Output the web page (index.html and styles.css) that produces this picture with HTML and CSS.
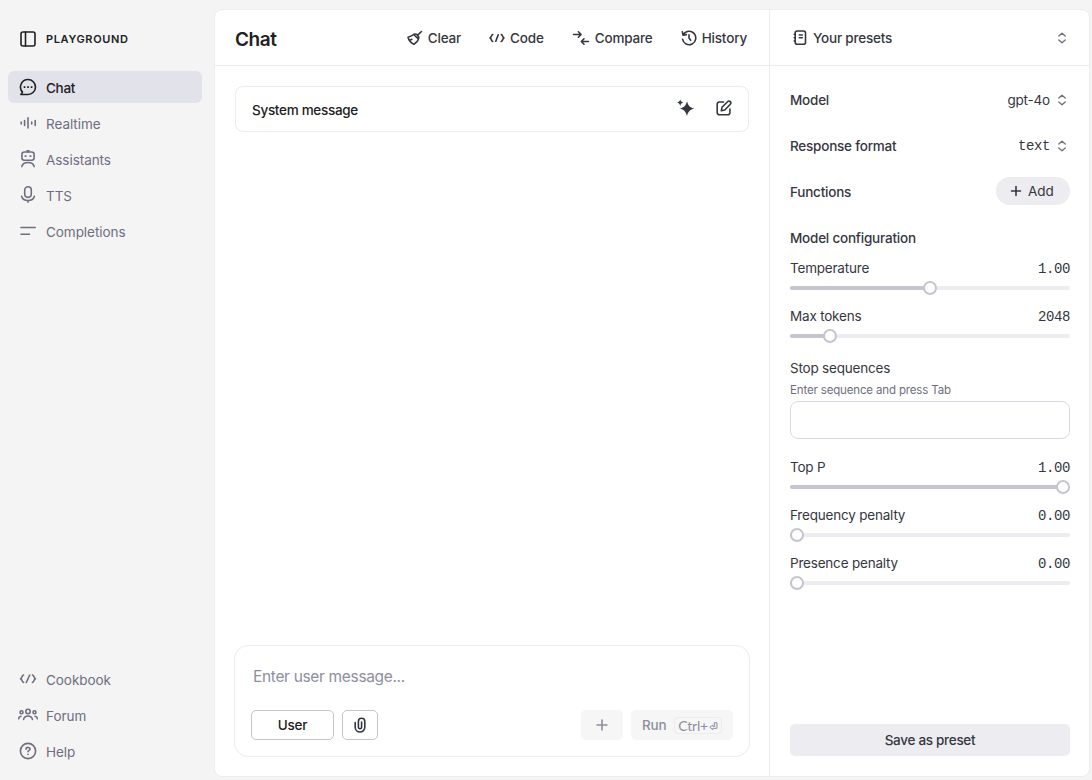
FILE: index.html
```html
<!DOCTYPE html>
<html lang="en">
<head>
<meta charset="utf-8">
<title>Playground</title>
<link rel="stylesheet" href="styles.css">
</head>
<body>
<div class="app">
  <aside class="sidebar">
    <div class="brand">
      <svg class="icon" width="20" height="20" viewBox="0 0 20 20"><rect x="3" y="3" width="14" height="14" rx="2"/><path d="M7.500 3v14"/></svg>
      <span>PLAYGROUND</span>
    </div>
    <nav class="nav">
      <a class="nav-item active"><svg class="icon" width="20" height="20" viewBox="0 0 20 20"><path d="M10 2.500a7.500 7.500 0 1 1 0 15H2.900l1.600-2.400A7.500 7.500 0 0 1 10 2.500z"/><path class="solid" d="M5.700 9.300h1.700v1.600H5.700zM9.200 9.300h1.700v1.600H9.200zM12.700 9.300h1.700v1.600h-1.700z"/></svg><span>Chat</span></a>
      <a class="nav-item"><svg class="icon" width="20" height="20" viewBox="0 0 20 20"><path d="M3.200 9v2M6.600 7.500v5M10 4.800v10.200M13.700 9v2M17.200 7.500v5"/></svg><span>Realtime</span></a>
      <a class="nav-item"><svg class="icon" width="20" height="20" viewBox="0 0 20 20"><path d="M9 1.800h2M10 2v1.200"/><rect x="3.900" y="3" width="12.200" height="8.200" rx="2.500"/><path class="solid" d="M6.600 6.200h1.900v1.900H6.600zM11.500 6.200h1.900v1.900h-1.900z"/><path d="M3.800 17.400c.8-2.600 3-3.900 6.200-3.900s5.400 1.300 6.200 3.900"/></svg><span>Assistants</span></a>
      <a class="nav-item"><svg class="icon" width="20" height="20" viewBox="0 0 20 20"><rect x="6.700" y="1.800" width="6.600" height="10.600" rx="3.300"/><path d="M3.600 11.200c.8 2.700 3.200 4.300 6.400 4.300s5.600-1.600 6.400-4.300M10 15.700v1.500"/></svg><span>TTS</span></a>
      <a class="nav-item"><svg class="icon" width="20" height="20" viewBox="0 0 20 20"><path d="M3 6.500h14.200M3 13.300h8.500"/></svg><span>Completions</span></a>
    </nav>
    <nav class="nav nav-bottom">
      <a class="nav-item"><svg class="icon" width="20" height="20" viewBox="0 0 20 20"><path d="M5.500 6C3.500 6.500 4.500 9 2.500 9.700c2 .7 1 3.200 3 3.700M14.500 6c2 .5 1 3 3 3.700-2 .7-1 3.200-3 3.700M11.700 6l-3.400 7.500"/></svg><span>Cookbook</span></a>
      <a class="nav-item"><svg class="icon" width="20" height="20" viewBox="0 0 20 20"><circle cx="10" cy="6.500" r="2.200"/><circle cx="3.500" cy="7.200" r="1.500"/><circle cx="16.500" cy="7.200" r="1.500"/><path d="M5.600 14.400c.6-2.500 2.200-3.400 4.400-3.400s3.800.9 4.400 3.400M.7 13.800c.1-1.500.9-2.500 2.300-2.600M19.300 13.800c-.1-1.500-.9-2.500-2.300-2.600"/></svg><span>Forum</span></a>
      <a class="nav-item"><svg class="icon" width="20" height="20" viewBox="0 0 20 20"><circle cx="10" cy="10" r="7.600"/><path d="M8 8.100c.2-2.400 4.200-2.100 4 .1-.1 1.300-2 1.200-2 2.600M10 13.200v.2"/></svg><span>Help</span></a>
    </nav>
  </aside>

  <main class="panel">
    <section class="chat">
      <header class="chat-head">
        <h1>Chat</h1>
        <div class="tools">
          <button class="tool clear"><svg class="icon" width="16" height="16" viewBox="0 0 16 16"><path d="M14.500 1.500 10.600 5.200M6.500 4.500C5 5.800 3.300 6.700 1 7.200c.9 3.400 3 5.800 6 7 2.200-1.300 3.800-3 4.500-5.300M6.500 4.500c1.200-.8 2.800-.5 4 .6s1.600 2.500 1 3.800zM2.400 10.500l2.400-1.200M6.500 4.500l5 4.400"/></svg><span>Clear</span></button>
          <button class="tool code"><svg class="icon" width="16" height="16" viewBox="0 0 16 16"><path d="M3.700 4.500C2 5 2.700 7.500 1 8c1.700.5 1 3 2.700 3.500M12.300 4.500c1.700.5 1 3 2.700 3.500-1.700.5-1 3-2.700 3.500M9.200 4.800l-2.400 6.400"/></svg><span>Code</span></button>
          <button class="tool compare"><svg class="icon" width="18" height="16" viewBox="0 0 18 16"><path d="M1.500 4.500H9M6.400 1.800 9.100 4.500 6.400 7.200M16.500 11.500H9.300M12 8.800l-2.700 2.700 2.700 2.700"/></svg><span>Compare</span></button>
          <button class="tool history"><svg class="icon" width="16" height="16" viewBox="0 0 16 16"><path d="M1.500 9.200A6.700 6.700 0 1 0 2.300 4.600M1.300 1.700l.7 3.400 3.400-.5M8 4.800V8l1.700 2.300"/></svg><span>History</span></button>
        </div>
      </header>
      <div class="chat-body">
        <div class="system">
          <span>System message</span>
          <div class="system-icons">
            <svg class="icon" width="18" height="18" viewBox="0 0 18 18"><path class="solid" d="M10 2.200c1.300 4.600 2.800 6.100 7.400 7.400-4.600 1.300-6.100 2.800-7.400 7.400-1.300-4.600-2.800-6.100-7.400-7.400C7.200 8.300 8.700 6.800 10 2.200zM3.200.5c.7 1.900 1.200 2.400 3.100 3.100-1.900.7-2.400 1.200-3.100 3.100C2.500 4.800 2 4.300.1 3.600 2 2.900 2.500 2.400 3.200.5z"/></svg>
            <svg class="icon" width="18" height="18" viewBox="0 0 18 18"><path d="M8.500 3H4.300A2.100 2.100 0 0 0 2.200 5.100v8.600a2.100 2.100 0 0 0 2.100 2.100h8.500a2.100 2.100 0 0 0 2.100-2.100V10M12.600 2.700a1.800 1.800 0 0 1 2.700 2.600l-5.600 5.700-3.400.8.700-3.500z"/></svg>
          </div>
        </div>
        <div class="composer">
          <div class="placeholder">Enter user message...</div>
          <div class="composer-row">
            <button class="btn user">User</button>
            <button class="btn attach"><svg class="icon" width="16" height="18" viewBox="0 0 16 18"><path d="M3.200 6.500v4.700a4.800 4.800 0 0 0 9.600 0V5.400a3.200 3.200 0 0 0-6.400 0v5.800a1.600 1.600 0 0 0 3.200 0V6"/></svg></button>
            <span class="spacer"></span>
            <button class="btn muted add-msg"><svg class="icon" width="14" height="14" viewBox="0 0 14 14"><path d="M7 2v10M2 7h10"/></svg></button>
            <button class="btn muted run"><span>Run</span><kbd>Ctrl+<svg class="icon" width="9" height="9" viewBox="0 0 9 9"><path d="M5.500.8H8v5.500H3.800v1.400L.8 5.300l3-2.300v1.300h1.700z"/></svg></kbd></button>
          </div>
        </div>
      </div>
    </section>

    <section class="settings">
      <header class="presets">
        <svg class="icon" width="16" height="16" viewBox="0 0 16 16"><rect x="3.200" y="1" width="10.300" height="13.300" rx="2"/><path d="M2.200 4.300h1M2.200 7.700h1M2.200 11h1M7.300 5h3M7.300 7.800h3"/></svg>
        <span>Your presets</span>
        <svg class="icon updown" width="10" height="12" viewBox="0 0 10 12"><path d="M1.800 4 5 1.200 8.200 4M1.800 8 5 10.800 8.200 8"/></svg>
      </header>
      <div class="form">
        <div class="row"><b>Model</b><span class="select">gpt-4o <svg class="icon updown" width="10" height="12" viewBox="0 0 10 12"><path d="M1.800 4 5 1.200 8.200 4M1.800 8 5 10.800 8.200 8"/></svg></span></div>
        <div class="row"><b>Response format</b><span class="select"><code>text</code> <svg class="icon updown" width="10" height="12" viewBox="0 0 10 12"><path d="M1.800 4 5 1.200 8.200 4M1.800 8 5 10.800 8.200 8"/></svg></span></div>
        <div class="row"><b>Functions</b><button class="add"><svg class="icon" width="12" height="12" viewBox="0 0 12 12"><path d="M6 1.500v9M1.500 6h9"/></svg><span>Add</span></button></div>
        <div class="row config"><b>Model configuration</b></div>
        <div class="field"><div class="label"><span>Temperature</span><code>1.00</code></div><div class="track"><div class="fill" style="width:140px"></div><div class="thumb"></div></div></div>
        <div class="field"><div class="label"><span>Max tokens</span><code>2048</code></div><div class="track"><div class="fill" style="width:40px"></div><div class="thumb"></div></div></div>
        <div class="stop"><div class="label"><span>Stop sequences</span></div><div class="hint">Enter sequence and press Tab</div><div class="input"></div></div>
        <div class="field"><div class="label"><span>Top P</span><code>1.00</code></div><div class="track"><div class="fill" style="width:273px"></div><div class="thumb"></div></div></div>
        <div class="field"><div class="label"><span>Frequency penalty</span><code>0.00</code></div><div class="track"><div class="fill" style="width:7px"></div><div class="thumb"></div></div></div>
        <div class="field"><div class="label"><span>Presence penalty</span><code>0.00</code></div><div class="track"><div class="fill" style="width:7px"></div><div class="thumb"></div></div></div>
        <button class="save">Save as preset</button>
      </div>
    </section>
  </main>
</div>
</body>
</html>
```

FILE: styles.css
```css
* { box-sizing: border-box; }
body { margin: 0; background: #f4f4f4; color: #353740; font: 13.5px/20px Inter, "Liberation Sans", sans-serif; letter-spacing: -.2px; }
button { font: inherit; letter-spacing: inherit; color: inherit; border: 0; padding: 0; background: none; }
.app { display: flex; height: 780px; padding: 9px 2px 3px 0; overflow: hidden; }
.icon { display: block; flex: none; fill: none; stroke: currentColor; stroke-width: 1.6; stroke-linecap: round; stroke-linejoin: round; }
.solid { fill: currentColor; stroke: none; }

.sidebar { width: 214px; padding: 0 12px 10px 8px; display: flex; flex-direction: column; }
.brand { display: flex; align-items: center; gap: 8px; height: 60px; padding-left: 10px; margin-bottom: 2px; font-size: 11px; font-weight: 600; letter-spacing: .65px; color: #202123; }
.nav { display: flex; flex-direction: column; gap: 4px; letter-spacing: -.05px; }
.nav-bottom { margin-top: auto; }
.nav-item { display: flex; align-items: center; gap: 8px; height: 32px; padding-left: 10px; border-radius: 6px; color: #6e6e80; }
.nav-item span { padding-top: 2px; }
.active { background: #e2e2ea; color: #202123; font-weight: 500; letter-spacing: -.3px; }

.panel { flex: 1; display: flex; background: #fff; border: 1px solid #ececf1; border-radius: 8px; overflow: hidden; }
.chat { width: 555px; display: flex; flex-direction: column; border-right: 1px solid #ececec; }
.chat-head { display: flex; align-items: center; justify-content: space-between; height: 56px; padding: 0 22px 0 20px; border-bottom: 1px solid #ececec; }
h1 { margin: 4px 0 0; font-size: 19px; line-height: 24px; font-weight: 600; letter-spacing: -.4px; color: #202123; }
.tools { display: flex; gap: 28px; font-weight: 500; letter-spacing: -.17px; }
.tool { display: flex; align-items: center; gap: 5px; }
.tool span { padding-top: 1px; }
.chat-body { flex: 1; display: flex; flex-direction: column; justify-content: space-between; padding: 20px 19px 19px; }
.system { display: flex; align-items: center; justify-content: space-between; height: 46px; margin: 0 1px; padding: 1px 15px 0 16px; border: 1px solid #ececec; border-radius: 8px; font-weight: 500; letter-spacing: -.3px; color: #202123; }
.system-icons { display: flex; gap: 20px; color: #353740; margin-top: -3px; }
.composer { height: 112px; padding: 21px 16px 16px; border: 1px solid #ececec; border-radius: 14px; }
.placeholder { padding-left: 2px; font-size: 15.5px; letter-spacing: -.33px; color: #8e8ea0; }
.composer-row { display: flex; margin-top: 23px; gap: 8px; }
.btn { display: flex; align-items: center; justify-content: center; height: 30px; border-radius: 5px; font-weight: 500; }
.user { width: 83px; border: 1px solid #c5c5d2; color: #202123; }
.attach { width: 36px; border: 1px solid #c5c5d2; }
.spacer { flex: 1; }
.muted { background: #f6f6f6; color: #8e8ea0; }
.add-msg { width: 42px; }
.run { width: 102px; gap: 8px; }
kbd { display: flex; align-items: center; gap: 1px; height: 17px; padding: 2px 3px 0; border: 1px solid #ececf1; border-radius: 4px; font: 14px/14px Lato, sans-serif; }
kbd .icon { stroke-width: 1; }

.settings { flex: 1; display: flex; flex-direction: column; }
.presets { display: flex; align-items: center; gap: 5px; height: 56px; padding: 0 22px; border-bottom: 1px solid #ececec; font-weight: 500; letter-spacing: -.2px; }
.presets span { padding-top: 1px; }
.updown { color: #6e6e80; stroke-width: 1.3; }
.presets .updown { margin-left: auto; }
.form { flex: 1; display: flex; flex-direction: column; padding: 11px 19px 20px 20px; }
.row { display: flex; align-items: center; justify-content: space-between; height: 46px; }
.row b { font-weight: 500; letter-spacing: -.22px; margin-top: -1px; }
.select { display: flex; align-items: center; gap: 7px; padding-right: 3px; }
code { font: 14px/20px "Liberation Mono", monospace; letter-spacing: -.4px; }
.add { display: flex; align-items: center; gap: 6px; width: 74px; height: 28px; padding-left: 14px; margin-top: -3px; border-radius: 14px; background: #ececf1; letter-spacing: 0; }
.config { height: 44px; }
.config b { margin-top: 1px; }
.field { height: 48px; }
.label { display: flex; justify-content: space-between; }
.label span { margin-top: -1px; }
.label code { margin-bottom: -1px; }
.track { display: flex; align-items: center; height: 4px; margin-top: 8px; border-radius: 2px; background: #ececf1; }
.fill { height: 4px; border-radius: 2px; background: #c5c5d2; }
.thumb { flex: none; width: 14px; height: 14px; margin-left: -7px; border: 2px solid #c5c5d2; border-radius: 50%; background: #fff; }
.stop { height: 103px; padding-top: 4px; }
.hint { font-size: 11.5px; line-height: 20px; margin-top: 2px; letter-spacing: -.15px; color: #6e6e80; }
.input { height: 38px; margin-top: 1px; border: 1px solid #d9d9e3; border-radius: 8px; }
.save { height: 32px; margin-top: auto; border-radius: 5px; background: #ececf1; font-weight: 500; letter-spacing: -.3px; }
```
